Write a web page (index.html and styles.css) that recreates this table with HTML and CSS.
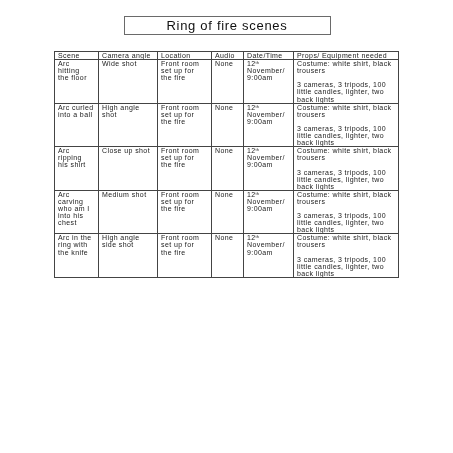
FILE: index.html
```html
<!DOCTYPE html>
<html>
<head>
<meta charset="utf-8">
<link rel="stylesheet" href="styles.css">
</head>
<body>
<div class="page">
  <div class="title">Ring of fire scenes</div>
  <table class="scenes">
    <colgroup>
      <col class="c1"><col class="c2"><col class="c3"><col class="c4"><col class="c5"><col class="c6">
    </colgroup>
    <thead>
      <tr><th>Scene</th><th>Camera angle</th><th>Location</th><th>Audio</th><th>Date/Time</th><th>Props/ Equipment needed</th></tr>
    </thead>
    <tbody>
      <tr>
        <td>Arc<br>hitting<br>the floor</td>
        <td>Wide shot</td>
        <td>Front room<br>set up for<br>the fire</td>
        <td>None</td>
        <td>12<sup>th</sup><br>November/<br>9:00am</td>
        <td><p>Costume: white shirt, black<br>trousers</p><p>3 cameras, 3 tripods, 100<br>little candles, lighter, two<br>back lights</p></td>
      </tr>
      <tr>
        <td>Arc curled<br>into a ball</td>
        <td>High angle<br>shot</td>
        <td>Front room<br>set up for<br>the fire</td>
        <td>None</td>
        <td>12<sup>th</sup><br>November/<br>9:00am</td>
        <td><p>Costume: white shirt, black<br>trousers</p><p>3 cameras, 3 tripods, 100<br>little candles, lighter, two<br>back lights</p></td>
      </tr>
      <tr>
        <td>Arc<br>ripping<br>his shirt</td>
        <td>Close up shot</td>
        <td>Front room<br>set up for<br>the fire</td>
        <td>None</td>
        <td>12<sup>th</sup><br>November/<br>9:00am</td>
        <td><p>Costume: white shirt, black<br>trousers</p><p>3 cameras, 3 tripods, 100<br>little candles, lighter, two<br>back lights</p></td>
      </tr>
      <tr>
        <td>Arc<br>carving<br>who am I<br>into his<br>chest</td>
        <td>Medium shot</td>
        <td>Front room<br>set up for<br>the fire</td>
        <td>None</td>
        <td>12<sup>th</sup><br>November/<br>9:00am</td>
        <td><p>Costume: white shirt, black<br>trousers</p><p>3 cameras, 3 tripods, 100<br>little candles, lighter, two<br>back lights</p></td>
      </tr>
      <tr>
        <td>Arc in the<br>ring with<br>the knife</td>
        <td>High angle<br>side shot</td>
        <td>Front room<br>set up for<br>the fire</td>
        <td>None</td>
        <td>12<sup>th</sup><br>November/<br>9:00am</td>
        <td><p>Costume: white shirt, black<br>trousers</p><p>3 cameras, 3 tripods, 100<br>little candles, lighter, two<br>back lights</p></td>
      </tr>
    </tbody>
  </table>
</div>
</body>
</html>
```
FILE: styles.css
```css
html, body {
  margin: 0;
  padding: 0;
  background: #ffffff;
}
body {
  font-family: "Liberation Sans", Arial, sans-serif;
  color: #1a1a1a;
}
.page {
  width: 453px;
  padding-top: 16px;
  display: flex;
  flex-direction: column;
  align-items: center;
  filter: grayscale(1);
}
.title {
  box-sizing: border-box;
  width: 207px;
  height: 19px;
  border: 1px solid #6a6a6a;
  font-size: 13px;
  letter-spacing: 0.7px;
  line-height: 17px;
  text-align: center;
  color: #111111;
  margin-left: 1px;
}
.scenes {
  margin-top: 16px;
  border-collapse: collapse;
  table-layout: fixed;
  width: 344px;
  font-size: 7px;
  letter-spacing: 0.4px;
  line-height: 7.1px;
  color: #1a1a1a;
}
.c1 { width: 44px; }
.c2 { width: 59px; }
.c3 { width: 54px; }
.c4 { width: 32px; }
.c5 { width: 50px; }
.c6 { width: 105px; }
.scenes th,
.scenes td {
  border: 1px solid #444444;
  padding: 0 1px 0 3px;
  vertical-align: top;
  text-align: left;
  font-weight: normal;
  white-space: nowrap;
  overflow: hidden;
}
.scenes th {
  padding-top: 0;
  padding-bottom: 0;
  height: 6px;
}
.scenes p {
  margin: 0;
}
.scenes p + p {
  margin-top: 7.1px;
}
.scenes sup {
  font-size: 4px;
  line-height: 0;
  vertical-align: 2px;
  letter-spacing: 0;
}
```
